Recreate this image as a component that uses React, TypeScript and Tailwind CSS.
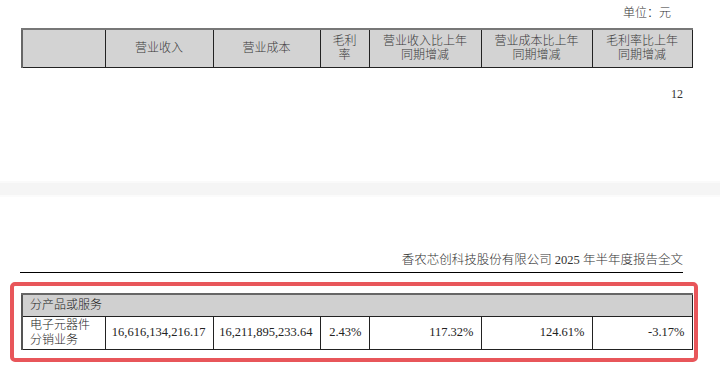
const font = {
  fontFamily: '"Liberation Serif", "Noto Sans CJK SC", serif',
};

const cols = [83, 108, 107, 49, 112, 111, 100];

const headers = [
  [""],
  ["营业收入"],
  ["营业成本"],
  ["毛利", "率"],
  ["营业收入比上年", "同期增减"],
  ["营业成本比上年", "同期增减"],
  ["毛利率比上年", "同期增减"],
];

const row = ["16,616,134,216.17", "16,211,895,233.64", "2.43%", "117.32%", "124.61%", "-3.17%"];

function Cols() {
  return (
    <colgroup>
      {cols.map((w, i) => (
        <col key={i} style={{ width: w }} />
      ))}
    </colgroup>
  );
}

export default function App() {
  return (
    <div className="w-[720px] h-[370px] overflow-hidden bg-white text-[12px] font-light text-[#222]" style={font}>
      {/* previous page (bottom part) */}
      <div className="h-[181px] flex flex-col">
        <div className="pt-[5px] pr-[49px] text-right leading-[16px] text-[#333]">单位：元</div>
        <table className="mt-[7px] ml-[21px] w-[670px] table-fixed border-collapse border-t-2 border-l-2 border-t-[#777] border-l-[#666]">
          <Cols />
          <tbody>
            <tr className="h-[38px] bg-[#d3d3d3]">
              {headers.map((lines, i) => (
                <td
                  key={i}
                  className="border-r border-b border-[#222] text-center align-middle leading-[14px] text-[#3a3a3a]"
                >
                  {lines.map((l, j) => (
                    <div key={j}>{l}</div>
                  ))}
                </td>
              ))}
            </tr>
          </tbody>
        </table>
        <div className="mt-[18px] pr-[37px] text-right leading-[16px] text-[#333]">12</div>
      </div>

      {/* gap between pages */}
      <div className="h-[2px] bg-[#fafafa]" />
      <div className="h-[12px] bg-[#f5f5f5]" />
      <div className="h-[2px] bg-[#fbfbfb]" />

      {/* next page */}
      <div className="pt-[55px]">
        <div className="ml-[20px] w-[663px] border-b border-black pb-[4px] text-right leading-[16px] text-[12.5px] text-[#333]">
          香农芯创科技股份有限公司 2025 年半年度报告全文
        </div>
        <div className="mt-[9px] ml-[10px] w-[688px] rounded-[5px] border-4 border-[#e8565a] pl-[7px] pr-[3px] pt-[7px] pb-[8px]">
          <table className="w-[670px] table-fixed border-collapse border-t-2 border-l-2 border-t-[#666] border-l-[#555]">
            <Cols />
            <tbody>
              <tr className="h-[22px] bg-[#d0d0d0]">
                <td colSpan={7} className="border-r border-b border-[#222] pl-[7px] align-middle leading-[16px]">
                  分产品或服务
                </td>
              </tr>
              <tr className="h-[33px]">
                <td className="border-r border-b border-[#222] pl-[7px] align-middle leading-[15px]">
                  <div>电子元器件</div>
                  <div>分销业务</div>
                </td>
                {row.map((v, i) => (
                  <td key={i} className="border-r border-b border-[#222] pr-[7px] text-right align-middle text-[12.5px]">
                    {v}
                  </td>
                ))}
              </tr>
            </tbody>
          </table>
        </div>
      </div>
    </div>
  );
}
